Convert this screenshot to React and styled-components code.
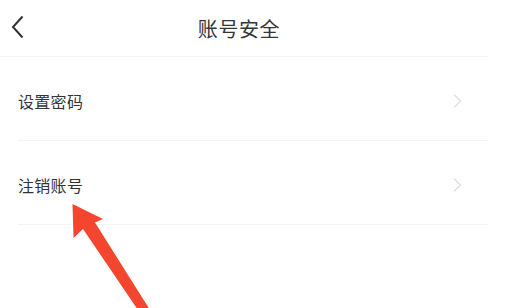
import React from "react";
import styled, { createGlobalStyle } from "styled-components";

const GlobalStyle = createGlobalStyle`
  html, body {
    margin: 0;
    padding: 0;
    background: #fff;
    font-family: "Noto Sans CJK SC", "Noto Sans", sans-serif;
  }
`;

const Page = styled.div`
  position: relative;
  width: 522px;
  height: 308px;
  overflow: hidden;
  background: #fff;
`;

const Screen = styled.div`
  width: 488px;
`;

const Header = styled.div`
  height: 56px;
  display: flex;
  align-items: center;
  justify-content: center;
  position: relative;
  border-bottom: 1px solid #f1f5f7;
`;

const BackButton = styled.button`
  position: absolute;
  left: 8px;
  top: 13px;
  width: 20px;
  height: 28px;
  padding: 0;
  border: none;
  background: none;
  display: flex;
  align-items: center;
  justify-content: center;
`;

const Title = styled.h1`
  margin: 0 0 0 -10px;
  font-size: 20px;
  font-weight: 400;
  color: #363636;
  letter-spacing: 0.6px;
`;

const List = styled.div`
  padding-left: 18px;
`;

const Row = styled.div`
  height: 84px;
  padding-top: 4px;
  box-sizing: border-box;
  display: flex;
  align-items: center;
  justify-content: space-between;
  padding-right: 26px;
  border-bottom: 1px solid #f1f5f7;
`;

const Label = styled.span`
  font-size: 16px;
  color: #333;
  letter-spacing: 0.3px;
`;

const Arrow = styled.svg`
  position: absolute;
  left: 0;
  top: 0;
  pointer-events: none;
`;

const Chevron = () => (
  <svg width="10" height="16" viewBox="0 0 10 16">
    <path d="M2 1.5 L8.5 8 L2 14.5" fill="none" stroke="#dedede" strokeWidth="1.3" />
  </svg>
);

export default function App() {
  return (
    <Page>
      <GlobalStyle />
      <Screen>
        <Header>
          <BackButton aria-label="back">
            <svg width="16" height="26" viewBox="0 0 16 26">
              <path d="M12.5 2.5 L3 13 L12.5 23.5" fill="none" stroke="#333" strokeWidth="2" />
            </svg>
          </BackButton>
          <Title>账号安全</Title>
        </Header>
        <List>
          <Row>
            <Label>设置密码</Label>
            <Chevron />
          </Row>
          <Row>
            <Label>注销账号</Label>
            <Chevron />
          </Row>
        </List>
      </Screen>
      <Arrow width="522" height="308" viewBox="0 0 522 308">
        <path
          d="M72.5 204 L103 219 L95 222.5 L150 310 L138 310 L83 229 L73.5 238 Z"
          fill="#f4462f"
        />
      </Arrow>
    </Page>
  );
}
